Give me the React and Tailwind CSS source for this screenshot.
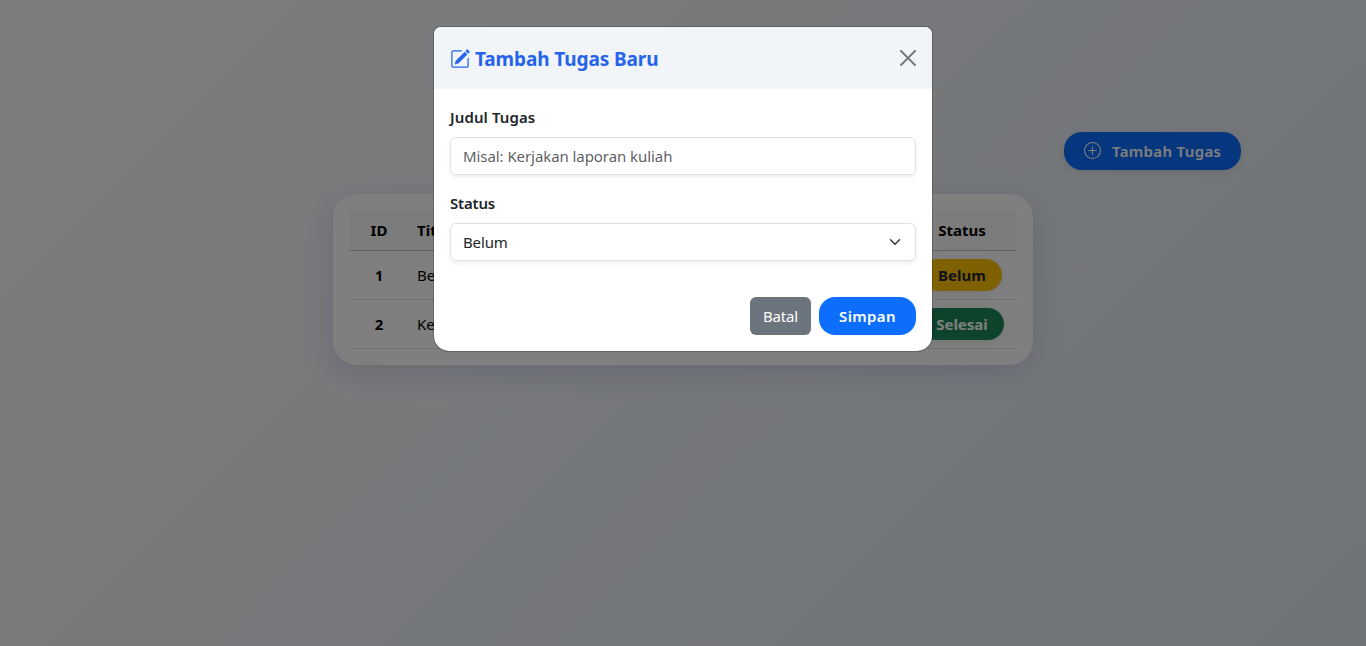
import React from 'react';

function PencilSquare() {
  return (
    <svg width="20" height="20" viewBox="0 0 16 16" fill="currentColor" className="shrink-0">
      <path d="M15.502 1.94a.5.5 0 0 1 0 .706L14.459 3.69l-2-2L13.502.646a.5.5 0 0 1 .707 0l1.293 1.293zm-1.75 2.456-2-2L4.939 9.21a.5.5 0 0 0-.121.196l-.805 2.414a.25.25 0 0 0 .316.316l2.414-.805a.5.5 0 0 0 .196-.12l6.813-6.814z" stroke="currentColor" strokeWidth="0.3" />
      <path fillRule="evenodd" d="M1 13.5A1.5 1.5 0 0 0 2.5 15h11a1.5 1.5 0 0 0 1.5-1.5v-6a.5.5 0 0 0-1 0v6a.5.5 0 0 1-.5.5h-11a.5.5 0 0 1-.5-.5v-11a.5.5 0 0 1 .5-.5H9a.5.5 0 0 0 0-1H2.5A1.5 1.5 0 0 0 1 2.5z" />
    </svg>
  );
}

function PlusCircle() {
  return (
    <svg width="17" height="17" viewBox="0 0 16 16" fill="currentColor" className="mb-px shrink-0">
      <path d="M8 15A7 7 0 1 1 8 1a7 7 0 0 1 0 14m0 1A8 8 0 1 0 8 0a8 8 0 0 0 0 16" />
      <path d="M8 4a.5.5 0 0 1 .5.5v3h3a.5.5 0 0 1 0 1h-3v3a.5.5 0 0 1-1 0v-3h-3a.5.5 0 0 1 0-1h3v-3A.5.5 0 0 1 8 4" />
    </svg>
  );
}

const rows = [
  { id: 1, title: 'Belajar', status: 'Belum', badge: 'bg-[#ffc107] text-[#212529] w-[80px]' },
  { id: 2, title: 'Kerjakan', status: 'Selesai', badge: 'bg-[#198754] text-white w-[84px]' },
];

export default function App() {
  return (
    <div className="relative h-[646px] w-full overflow-hidden bg-[linear-gradient(135deg,#f8fafc_0%,#e0e7ef_100%)] font-['Noto_Sans','Open_Sans',sans-serif] text-[15px] leading-6 text-[#212529]">
      <main className="pt-[132px]">
        <div className="flex justify-end pr-[125px]">
          <button className="flex h-[38px] w-[177px] items-center rounded-[18px] bg-[#0d6efd] pl-5 font-semibold text-white shadow-[0_2px_8px_rgba(0,0,0,0.1)]">
            <PlusCircle />
            <span className="ml-[11px] tracking-[0.35px] whitespace-nowrap">Tambah Tugas</span>
          </button>
        </div>
        <section className="mx-auto mt-6 h-[171px] w-[700px] rounded-3xl bg-white p-4 shadow-[0_8px_32px_rgba(31,38,135,0.15)]">
          <div className="flex h-[41px] items-center border-b border-[#c6c7c8] bg-[#f8f9fa] font-bold text-black">
            <div className="w-[60px] text-center">ID</div>
            <div className="flex-1 pl-2">Title</div>
            <div className="w-[110px] text-center">Status</div>
          </div>
          {rows.map((row) => (
            <div key={row.id} className="flex h-[49px] items-center border-b border-[#dee2e6] text-black">
              <div className="w-[60px] text-center font-bold">{row.id}</div>
              <div className="flex-1 pl-2">{row.title}</div>
              <div className="flex w-[110px] justify-center">
                <span className={`flex h-8 items-center justify-center rounded-2xl font-bold shadow-[0_2px_8px_rgba(0,0,0,0.08)] ${row.badge}`}>
                  {row.status}
                </span>
              </div>
            </div>
          ))}
        </section>
      </main>

      <div className="absolute inset-0 bg-black/50">
        <div role="dialog" className="mx-auto mt-[26px] h-[326px] w-[500px] overflow-hidden rounded-t-[8px] rounded-b-[16px] border border-black/20 bg-white bg-clip-padding">
          <header className="flex h-[62px] items-center bg-[#f1f5f9] pt-px pr-4 pl-4 text-[#2563eb]">
            <PencilSquare />
            <h5 className="ml-[5px] flex-1 text-[19px] font-bold tracking-[-0.1px] whitespace-nowrap">Tambah Tugas Baru</h5>
            <svg width="16" height="16" viewBox="0 0 16 16" className="mb-[2px] fill-black/50">
              <path d="M.293.293a1 1 0 0 1 1.414 0L8 6.586 14.293.293a1 1 0 1 1 1.414 1.414L9.414 8l6.293 6.293a1 1 0 0 1-1.414 1.414L8 9.414l-6.293 6.293a1 1 0 0 1-1.414-1.414L6.586 8 .293 1.707a1 1 0 0 1 0-1.414z" />
            </svg>
          </header>
          <form className="px-4 pt-4">
            <label className="mb-2 block font-semibold tracking-[0.1px]">Judul Tugas</label>
            <input
              placeholder="Misal: Kerjakan laporan kuliah"
              className="mb-4 block h-[38px] w-full rounded-md border border-[#dee2e6] px-3 tracking-[-0.07px] shadow-[0_2px_4px_rgba(0,0,0,0.075)] outline-none placeholder:text-[#212529]/75"
            />
            <label className="mb-2 block font-semibold tracking-[-0.2px]">Status</label>
            <div className="flex h-[38px] items-center justify-between rounded-md border border-[#dee2e6] pr-3 pl-3 shadow-[0_2px_4px_rgba(0,0,0,0.075)]">
              <span className="tracking-[-0.15px]">Belum</span>
              <svg width="16" height="12" viewBox="0 0 16 16" fill="none" stroke="#343a40" strokeWidth="2" strokeLinecap="round" strokeLinejoin="round">
                <path d="m2 5 6 6 6-6" />
              </svg>
            </div>
            <div className="mt-9 flex justify-end gap-2">
              <button type="button" className="h-[38px] w-[61px] rounded-md bg-[#6c757d] tracking-[-0.2px] text-white">Batal</button>
              <button type="button" className="h-[38px] w-[97px] rounded-[16px] bg-[#0d6efd] font-semibold tracking-[0.4px] text-white">Simpan</button>
            </div>
          </form>
        </div>
      </div>
    </div>
  );
}
